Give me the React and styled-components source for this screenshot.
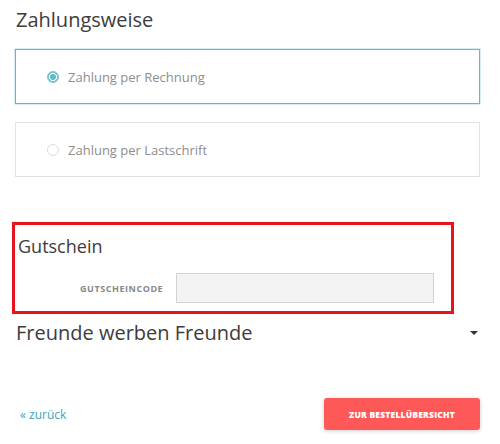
import styled, { createGlobalStyle } from "styled-components";

const Global = createGlobalStyle`
  body {
    margin: 0;
    background: #fff;
    font-family: "Open Sans", "Noto Sans", sans-serif;
    color: #444;
  }
`;

const Page = styled.div`
  width: 500px;
  height: 444px;
  padding: 10px 20px 0 15px;
  box-sizing: border-box;
  display: flex;
  flex-direction: column;
`;

const Title = styled.h2`
  margin: 0;
  font-size: ${({ $size }) => $size || 20}px;
  font-weight: 400;
  color: #3c3c3c;
  line-height: 1;
  padding-left: 1px;
`;

const Options = styled.div`
  display: flex;
  flex-direction: column;
  gap: 18px;
  margin-top: 19px;
`;

const Option = styled.div`
  height: 55px;
  box-sizing: border-box;
  border: 1px solid ${({ $active }) => ($active ? "#5cbccb" : "#e3e3e3")};
  box-shadow: ${({ $active }) =>
    $active ? "0 0 0 0.5px rgba(92, 188, 203, 0.5)" : "none"};
  display: flex;
  align-items: center;
  padding-left: 31px;
  gap: 9px;
  font-size: 13px;
  color: #8e8e8e;
`;

const Radio = styled.span`
  width: 12px;
  height: 12px;
  border-radius: 50%;
  box-sizing: border-box;
  border: 1px solid ${({ $checked }) => ($checked ? "#74c6d0" : "#dcdcdc")};
  background: ${({ $checked }) =>
    $checked
      ? "radial-gradient(circle, #5fbccb 0 2.8px, #fff 3.2px 3.8px, #74c6d0 4.2px)"
      : "#fff"};
`;

const Highlight = styled.section`
  margin: 45px 26px 0 -3px;
  border: 3px solid #e8141b;
  padding: 12px 17px 8px 2px;
`;

const CodeRow = styled.div`
  display: flex;
  align-items: center;
  gap: 13px;
  margin-top: 18px;
  padding-left: 63px;
`;

const CodeLabel = styled.span`
  font-size: 9px;
  font-weight: 700;
  letter-spacing: 0.55px;
  color: #888;
`;

const CodeInput = styled.input`
  flex: 1;
  height: 30px;
  box-sizing: border-box;
  border: 1px solid #d4d4d4;
  background: #f3f3f3;
  outline: none;
`;

const Collapse = styled.div`
  display: flex;
  align-items: center;
  justify-content: space-between;
  margin-top: 9px;
  padding-right: 2px;
`;

const Caret = styled.span`
  width: 0;
  height: 0;
  border-left: 4px solid transparent;
  border-right: 4px solid transparent;
  border-top: 4px solid #333;
`;

const Footer = styled.div`
  display: flex;
  align-items: center;
  justify-content: space-between;
  margin-top: 55px;
`;

const Back = styled.a`
  font-size: 12px;
  color: #3aa6b6;
  margin-left: 5px;
  margin-top: 1px;
  text-decoration: none;
`;

const Submit = styled.button`
  width: 156px;
  height: 32px;
  border: 0;
  border-radius: 3px;
  background: #ff5858;
  color: #fff;
  font-family: "Open Sans", sans-serif;
  font-size: 8.5px;
  font-weight: 800;
  letter-spacing: 0.2px;
  box-shadow: 0 1px 4px rgba(0, 0, 0, 0.2);
`;

export default function App() {
  return (
    <>
      <Global />
      <Page>
        <Title>Zahlungsweise</Title>
        <Options>
          <Option $active>
            <Radio $checked />
            Zahlung per Rechnung
          </Option>
          <Option>
            <Radio />
            Zahlung per Lastschrift
          </Option>
        </Options>
        <Highlight>
          <Title $size={18}>Gutschein</Title>
          <CodeRow>
            <CodeLabel>GUTSCHEINCODE</CodeLabel>
            <CodeInput />
          </CodeRow>
        </Highlight>
        <Collapse>
          <Title>Freunde werben Freunde</Title>
          <Caret />
        </Collapse>
        <Footer>
          <Back href="#">« zurück</Back>
          <Submit>ZUR BESTELLÜBERSICHT</Submit>
        </Footer>
      </Page>
    </>
  );
}
